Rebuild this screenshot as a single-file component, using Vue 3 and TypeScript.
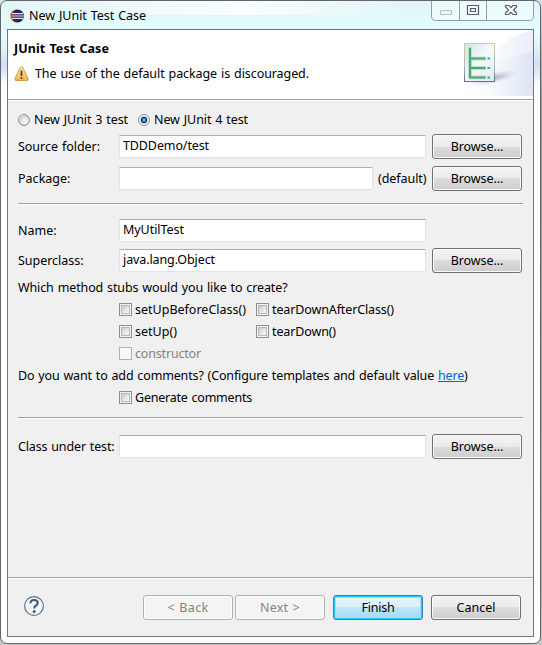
<script setup lang="ts">
import { ref } from 'vue'

interface Stub {
  label: string
  width: number
  disabled?: boolean
}

const junit = ref<3 | 4>(4)
const versions: (3 | 4)[] = [3, 4]
const stubs: Stub[] = [
  { label: 'setUpBeforeClass()', width: 111 },
  { label: 'tearDownAfterClass()', width: 122 },
  { label: 'setUp()', width: 42 },
  { label: 'tearDown()', width: 64 },
  { label: 'constructor', width: 66, disabled: true },
]

// Spreads the letters of a label over the given advance width.
const vFit = {
  mounted(el: HTMLElement, binding: { value: number }) {
    const n = (el.textContent ?? '').length
    const natural = el.getBoundingClientRect().width
    el.style.letterSpacing = `${(binding.value - natural) / n}px`
  },
}
</script>

<template>
  <div class="desktop">
    <div class="window">
      <header class="titlebar">
        <svg class="logo" viewBox="0 0 14 14" width="14" height="14">
          <circle cx="6.4" cy="7" r="6.4" fill="#f0952f" />
          <circle cx="7.6" cy="7" r="6.4" fill="#2d2359" />
          <path d="M2 4.6h11M1.3 7h12.6M2 9.4h11" stroke="#e6e6f2" stroke-width="1.1" />
        </svg>
        <span v-fit="117" class="t">New JUnit Test Case</span>
        <svg class="controls" viewBox="0 0 104 20" width="104" height="20">
          <path d="M.5 0V15Q.5 19.500 5 19.500H98Q102.500 19.500 102.500 15V0" fill="#f4ffff" fill-opacity=".55" stroke="#929fa3" />
          <path d="M28.500 0V19M55.500 0V19" stroke="#929fa3" />
          <rect x="9.500" y="9.500" width="11" height="4" rx=".5" fill="#f2f8f8" stroke="#b4bec2" />
          <path d="M36.500 4.500h11v9h-11zM39.500 7.500h5v3h-5z" fill="#fff" fill-rule="evenodd" stroke="#565b6e" stroke-width="1.200" />
          <path d="M74.500 4.500h3.500l2 2.200 2-2.200h3.500v1.500l-3 3 3 3v1.500h-3.500l-2-2.200-2 2.200h-3.500v-1.500l3-3-3-3z" fill="#fff" stroke="#565b6e" stroke-width="1.200" />
        </svg>
      </header>

      <main class="client">
        <section class="banner">
          <div class="messages">
            <div class="heading"><span v-fit="95" class="t">JUnit Test Case</span></div>
            <div class="warning">
              <svg viewBox="0 0 15 16" width="15" height="16">
                <defs>
                  <linearGradient id="warn" x1="0" y1="0" x2="0" y2="1">
                    <stop offset="0" stop-color="#fff0bd" />
                    <stop offset="1" stop-color="#efb548" />
                  </linearGradient>
                </defs>
                <path d="M6.200 1.500Q7.500 0 8.800 1.500L14 12.500Q14.500 14.500 13 14.500H2Q.5 14.500 1 12.500Z" fill="url(#warn)" stroke="#d69b45" />
                <path d="M7.500 4.500V10M7.500 11.200V13" stroke="#604014" stroke-width="1.800" />
              </svg>
              <span v-fit="274" class="t">The use of the default package is discouraged.</span>
            </div>
          </div>
          <svg class="art" viewBox="0 0 80 66" width="80" height="66">
            <defs>
              <linearGradient id="swoop" x1="0" y1="0" x2="1" y2="0">
                <stop offset="0" stop-color="#fff" />
                <stop offset=".4" stop-color="#f8f9fd" />
                <stop offset="1" stop-color="#d9e0f5" />
              </linearGradient>
              <linearGradient id="page" x1="0" y1="0" x2="1" y2="1">
                <stop offset="0" stop-color="#d5e2ed" />
                <stop offset=".5" stop-color="#f4f8fb" />
                <stop offset="1" stop-color="#dfe8f4" />
              </linearGradient>
              <linearGradient id="edge" x1="0" y1="0" x2="0" y2="1">
                <stop offset="0" stop-color="#e2c793" />
                <stop offset=".6" stop-color="#a8b9bd" />
                <stop offset="1" stop-color="#537a80" />
              </linearGradient>
              <radialGradient id="shade">
                <stop offset="0" stop-color="#85809b" stop-opacity=".65" />
                <stop offset="1" stop-color="#bbb8d0" stop-opacity="0" />
              </radialGradient>
            </defs>
            <path d="M10 66Q35 10 80 0V66Z" fill="url(#swoop)" opacity=".55" />
            <path d="M8 66Q40 28 80 21V66Z" fill="url(#swoop)" opacity=".7" />
            <ellipse cx="40" cy="48" rx="26" ry="6" fill="url(#shade)" transform="rotate(-12 40 48)" />
            <rect x="11.500" y="13.500" width="30" height="38" fill="url(#page)" stroke="url(#edge)" />
            <path d="M17 17V48M17 28.500H33M17 38H33M17 47.500H33" fill="none" stroke="#b9e0cb" stroke-width="4" />
            <path d="M17 18V48.500M16 28.500H32.500M16 38H32.500M16 47.500H32.500M34.500 28.500H37M34.500 38H37M34.500 47.500H37" fill="none" stroke="#4fa673" stroke-width="2" />
          </svg>
        </section>

        <section class="form">
          <div class="radios">
            <label v-for="v in versions" :key="v" class="radio" @click="junit = v">
              <span class="dot" :class="{ on: junit === v }"></span>
              <span v-fit="94" class="t">New JUnit {{ v }} test</span>
            </label>
          </div>

          <div class="row source">
            <span class="name"><span v-fit="82" class="t">Source folder:</span></span>
            <div class="field"><span v-fit="86" class="t">TDDDemo/test</span></div>
            <button class="btn"><span v-fit="52.5" class="t">Browse...</span></button>
          </div>
          <div class="row package">
            <span class="name"><span v-fit="52.5" class="t">Package:</span></span>
            <div class="field"></div>
            <span class="hint"><span v-fit="48.5" class="t">(default)</span></span>
            <button class="btn"><span v-fit="52.5" class="t">Browse...</span></button>
          </div>

          <div class="rule first"></div>

          <div class="row clsname">
            <span class="name"><span v-fit="38.5" class="t">Name:</span></span>
            <div class="field"><span v-fit="61" class="t">MyUtilTest</span></div>
            <span class="blank"></span>
          </div>
          <div class="row super">
            <span class="name"><span v-fit="65.5" class="t">Superclass:</span></span>
            <div class="field"><span v-fit="92" class="t">java.lang.Object</span></div>
            <button class="btn"><span v-fit="52.5" class="t">Browse...</span></button>
          </div>

          <div class="question stubs-q"><span v-fit="269.5" class="t">Which method stubs would you like to create?</span></div>
          <div class="stubs">
            <label v-for="s in stubs" :key="s.label" class="check" :class="{ off: s.disabled }">
              <span class="box"></span>
              <span v-fit="s.width" class="t">{{ s.label }}</span>
            </label>
          </div>

          <div class="question comments-q">
            <span v-fit="420" class="t">Do you want to add comments? (Configure templates and default value&nbsp;</span><a v-fit="26" class="t">here</a><span class="t">)</span>
          </div>
          <label class="check generate">
            <span class="box"></span>
            <span v-fit="117" class="t">Generate comments</span>
          </label>

          <div class="rule second"></div>

          <div class="row under">
            <span class="name"><span v-fit="96.5" class="t">Class under test:</span></span>
            <div class="field"></div>
            <button class="btn"><span v-fit="52.5" class="t">Browse...</span></button>
          </div>
        </section>

        <footer class="footer">
          <svg class="help" viewBox="0 0 22 22" width="22" height="22">
            <circle cx="11" cy="11" r="9.400" fill="#f3f6fa" stroke="#60708f" stroke-width="1.200" />
            <path d="M7.400 8.200Q7.600 5 11 5Q14.700 5 14.700 8Q14.700 9.700 12.700 10.800Q11.200 11.700 11.200 13.500" fill="none" stroke="#465b80" stroke-width="2.200" />
            <circle cx="11.200" cy="16.400" r="1.500" fill="#465b80" />
          </svg>
          <button class="btn disabled"><span v-fit="41" class="t">&lt; Back</span></button>
          <button class="btn disabled next"><span v-fit="40" class="t">Next &gt;</span></button>
          <button class="btn primary"><span v-fit="33" class="t">Finish</span></button>
          <button class="btn cancel"><span v-fit="39" class="t">Cancel</span></button>
        </footer>
      </main>
    </div>
  </div>
</template>

<style>
body {
  margin: 0;
  overflow: hidden;
}
</style>

<style scoped>
.desktop {
  box-sizing: border-box;
  width: 542px;
  height: 645px;
  background: linear-gradient(#d4e2e5 0, #a9afb1 60px, #989898 120px, #b5b5b5 600px, #c6c6c6 100%);
  font: 12.5px/20px 'Noto Sans', 'Open Sans', sans-serif;
  color: #000;
}
.t {
  display: inline-block;
  white-space: nowrap;
  word-spacing: 0.8px;
}
.window {
  box-sizing: border-box;
  width: 541px;
  height: 644px;
  padding: 0 6px 6px;
  border: 1px solid #626668;
  border-radius: 7px;
  background:
    linear-gradient(90deg, transparent 0, rgba(255, 255, 255, 0.8) 45%, transparent 75%) 0 0 / 100% 14px no-repeat,
    linear-gradient(#e2f4f7 0, #e2fdfc 28px, #e6f4fb 45px, #cfe1f7 62px, #d9e8f9 70px, #fbfdfe 84px, #fcfcfc 100%);
}
.titlebar {
  display: flex;
  height: 28px;
  padding-left: 3px;
}
.logo {
  margin: 8px 5px 0 0;
}
.titlebar > .t {
  margin-top: 5px;
}
.controls {
  margin-left: auto;
  margin-right: -1px;
}
.client {
  box-sizing: border-box;
  display: flex;
  flex-direction: column;
  width: 527px;
  height: 608px;
  border: 1px solid #717577;
  background: #f0f0f0;
}
.banner {
  display: flex;
  justify-content: space-between;
  box-sizing: border-box;
  height: 71px;
  border-bottom: 1px solid #fff;
  box-shadow: inset 0 -1px #a0a0a0;
  background: #fff;
}
.messages {
  padding: 9px 0 0 6px;
}
.heading {
  height: 20px;
  font-weight: 700;
}
.warning {
  display: flex;
  align-items: center;
  gap: 6px;
  margin-top: 5px;
}
.form {
  flex: 1;
  padding: 0 11px 0 10px;
}
.radios {
  display: flex;
  gap: 10px;
  height: 20px;
  padding-top: 9px;
}
.radio {
  display: flex;
  align-items: center;
  gap: 4px;
}
.dot {
  box-sizing: border-box;
  width: 12px;
  height: 12px;
  border: 1px solid #8e8f8f;
  border-radius: 50%;
  background: radial-gradient(circle at 60% 60%, #fff 0, #dfe1e5 45%, #c1c5ca 60%, #f4f4f4 68%);
}
.dot.on {
  background: radial-gradient(circle at 50% 50%, #8fd4ee 0, #2c81b2 22%, #123a5d 42%, #dfe3e6 52%, #f4f4f4 66%);
}
.row {
  display: flex;
  align-items: center;
  height: 25px;
}
.source {
  margin-top: 4px;
}
.package {
  margin-top: 7px;
}
.clsname {
  margin-top: 13px;
}
.super {
  margin-top: 5px;
}
.under {
  margin-top: 15px;
}
.name {
  width: 101px;
}
.field {
  box-sizing: border-box;
  flex: 1;
  height: 23px;
  padding-left: 3px;
  border: 1px solid #e2e3ea;
  border-top-color: #abadb3;
  border-radius: 1px;
  background: #fff;
}
.hint {
  margin-left: 5px;
}
.package .hint {
  width: 48px;
}
.blank {
  width: 96px;
}
.btn {
  box-sizing: border-box;
  width: 90px;
  height: 25px;
  margin: 0 0 0 6px;
  padding: 0;
  border: 1px solid #707070;
  border-radius: 3px;
  background: linear-gradient(#f3f3f3 0, #ebebeb 50%, #dcdcdc 50%, #cdcdcd 100%);
  box-shadow: inset 0 0 0 1px #fafafa;
  font: inherit;
  color: inherit;
  text-align: center;
}
.rule {
  height: 1px;
  margin-right: -1px;
  border-bottom: 1px solid #fff;
  background: #a0a0a0;
}
.first {
  margin-top: 12px;
}
.second {
  margin-top: 8px;
}
.question {
  display: flex;
  height: 20px;
}
.stubs-q {
  margin-top: 5px;
}
.comments-q {
  margin-top: 1px;
}
.question a {
  color: #0066cc;
  text-decoration: underline;
}
.stubs {
  display: grid;
  grid-template-columns: 137px auto;
  grid-auto-rows: 22px;
  margin: 1px 0 0 101px;
}
.check {
  display: flex;
  align-items: center;
  gap: 3px;
}
.box {
  box-sizing: border-box;
  width: 13px;
  height: 13px;
  margin-bottom: 1px;
  border: 1px solid #8e8f8f;
  background: linear-gradient(135deg, #c5cad1, #f3f3f3 80%) content-box;
  box-shadow: inset 0 0 0 1px #f4f4f4, inset 0 0 0 2px #b4b8be;
  padding: 2px;
}
.off {
  color: #838383;
}
.off .box {
  border-color: #b1b1b1;
  background: #f8f8f8;
  box-shadow: none;
}
.generate {
  height: 22px;
  margin: 1px 0 0 101px;
}
.footer {
  display: flex;
  box-sizing: border-box;
  height: 59px;
  padding: 17px 12px 0 15px;
  border-top: 1px solid #a0a0a0;
  box-shadow: inset 0 1px #fff;
}
.help {
  margin-right: auto;
}
.next {
  margin-left: 2px;
}
.disabled {
  border-color: #adb2b5;
  background: #f4f4f4;
  box-shadow: inset 0 0 0 1px #fcfcfc;
  color: #838383;
}
.primary {
  margin-left: 8px;
  border-color: #3c7fb1;
  background: linear-gradient(#eaf6fd 0, #d9f0fc 50%, #bee6fd 50%, #a7d9f5 100%);
  box-shadow: inset 0 0 0 1px #24ccf8, inset 0 0 0 2px #8be4fb;
}
.cancel {
  margin-left: 8px;
}
</style>
